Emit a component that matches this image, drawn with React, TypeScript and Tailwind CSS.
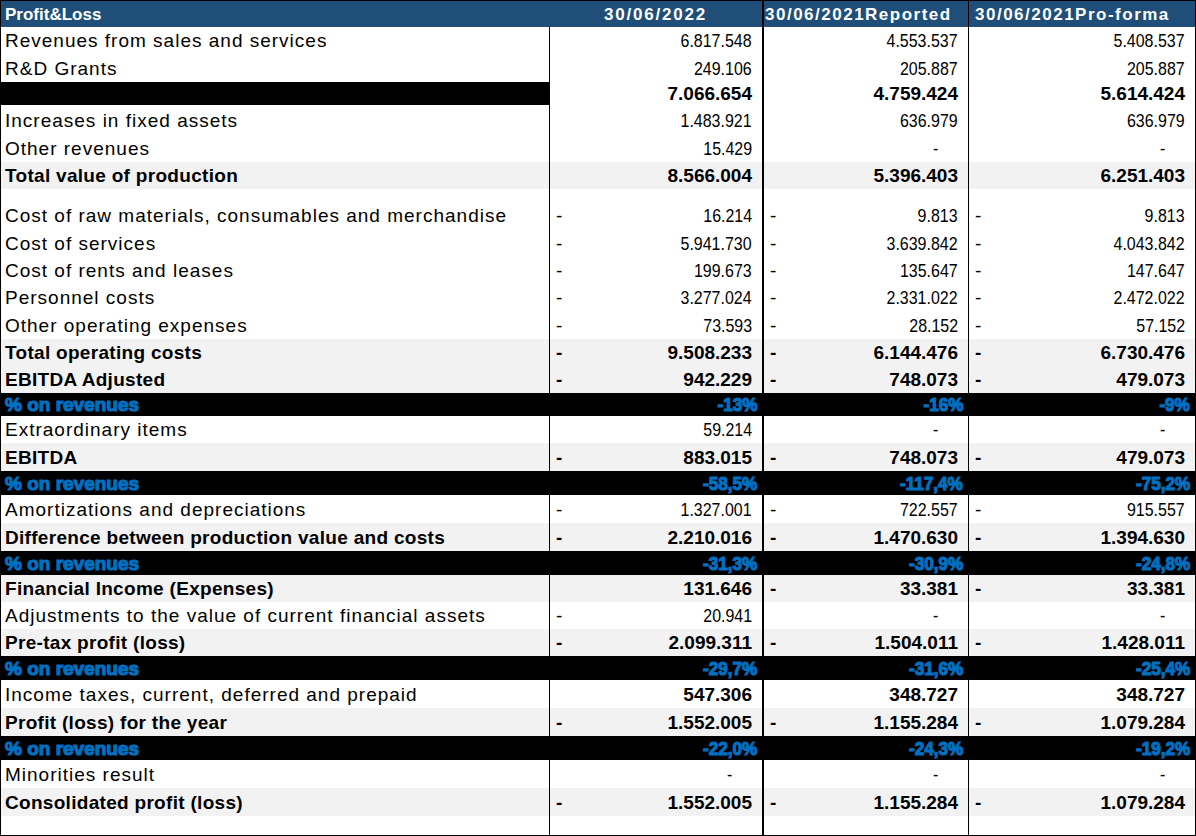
import React from "react";

type Kind = "normal" | "bold" | "pct" | "hidden" | "empty";

type Row = {
  label?: string;
  vals?: string[];
  kind: Kind;
  gray?: boolean;
  boldVals?: boolean;
  h: string;
};

const rows: Row[] = [
  { label: "Revenues from sales and services", vals: ["6.817.548", "4.553.537", "5.408.537"], kind: "normal", h: "h-[27px]" },
  { label: "R&D Grants", vals: ["249.106", "205.887", "205.887"], kind: "normal", h: "h-[28px]" },
  { label: "Total operating revenues", vals: ["7.066.654", "4.759.424", "5.614.424"], kind: "hidden", h: "h-[23px]" },
  { label: "Increases in fixed assets", vals: ["1.483.921", "636.979", "636.979"], kind: "normal", h: "h-[30px]" },
  { label: "Other revenues", vals: ["15.429", "0", "0"], kind: "normal", h: "h-[27px]" },
  { label: "Total value of production", vals: ["8.566.004", "5.396.403", "6.251.403"], kind: "bold", gray: true, h: "h-[27px]" },
  { kind: "empty", h: "h-[13px]" },
  { label: "Cost of raw materials, consumables and merchandise", vals: ["-16.214", "-9.813", "-9.813"], kind: "normal", h: "h-[27px]" },
  { label: "Cost of services", vals: ["-5.941.730", "-3.639.842", "-4.043.842"], kind: "normal", h: "h-[28px]" },
  { label: "Cost of rents and leases", vals: ["-199.673", "-135.647", "-147.647"], kind: "normal", h: "h-[27px]" },
  { label: "Personnel costs", vals: ["-3.277.024", "-2.331.022", "-2.472.022"], kind: "normal", h: "h-[27px]" },
  { label: "Other operating expenses", vals: ["-73.593", "-28.152", "-57.152"], kind: "normal", h: "h-[28px]" },
  { label: "Total operating costs", vals: ["-9.508.233", "-6.144.476", "-6.730.476"], kind: "bold", gray: true, h: "h-[27px]" },
  { label: "EBITDA Adjusted", vals: ["-942.229", "-748.073", "-479.073"], kind: "bold", gray: true, h: "h-[27px]" },
  { label: "% on revenues", vals: ["-13%", "-16%", "-9%"], kind: "pct", h: "h-[23px]" },
  { label: "Extraordinary items", vals: ["59.214", "0", "0"], kind: "normal", h: "h-[27px]" },
  { label: "EBITDA", vals: ["-883.015", "-748.073", "-479.073"], kind: "bold", gray: true, h: "h-[28px]" },
  { label: "% on revenues", vals: ["-58,5%", "-117,4%", "-75,2%"], kind: "pct", h: "h-[24px]" },
  { label: "Amortizations and depreciations", vals: ["-1.327.001", "-722.557", "-915.557"], kind: "normal", h: "h-[28px]" },
  { label: "Difference between production value and costs", vals: ["-2.210.016", "-1.470.630", "-1.394.630"], kind: "bold", gray: true, h: "h-[28px]" },
  { label: "% on revenues", vals: ["-31,3%", "-30,9%", "-24,8%"], kind: "pct", h: "h-[24px]" },
  { label: "Financial Income (Expenses)", vals: ["131.646", "-33.381", "-33.381"], kind: "bold", gray: true, h: "h-[27px]" },
  { label: "Adjustments to the value of current financial assets", vals: ["-20.941", "0", "0"], kind: "normal", h: "h-[27px]" },
  { label: "Pre-tax profit (loss)", vals: ["-2.099.311", "-1.504.011", "-1.428.011"], kind: "bold", gray: true, h: "h-[27px]" },
  { label: "% on revenues", vals: ["-29,7%", "-31,6%", "-25,4%"], kind: "pct", h: "h-[24px]" },
  { label: "Income taxes, current, deferred and prepaid", vals: ["547.306", "348.727", "348.727"], kind: "normal", boldVals: true, h: "h-[28px]" },
  { label: "Profit (loss) for the year", vals: ["-1.552.005", "-1.155.284", "-1.079.284"], kind: "bold", gray: true, h: "h-[28px]" },
  { label: "% on revenues", vals: ["-22,0%", "-24,3%", "-19,2%"], kind: "pct", h: "h-[24px]" },
  { label: "Minorities result", vals: ["0", "0", "0"], kind: "normal", h: "h-[28px]" },
  { label: "Consolidated profit (loss)", vals: ["-1.552.005", "-1.155.284", "-1.079.284"], kind: "bold", gray: true, h: "h-[28px]" },
];

const colBorders = ["border-l border-black", "border-l-2 border-black", "border-l border-black"];

function ValueCell({ v, bold, idx }: { v: string; bold: boolean; idx: number }) {
  const base = `${colBorders[idx]} flex items-center justify-between pl-[6px] leading-none`;
  if (v === "0") {
    return (
      <div className={`${base} justify-end pr-[30px]`}>
        <span className="inline-block origin-right scale-x-[0.84]">-</span>
      </div>
    );
  }
  const neg = v.startsWith("-");
  const num = neg ? v.slice(1) : v;
  return (
    <div className={`${base} pr-[10px] ${bold ? "font-bold" : ""}`}>
      <span>{neg ? "-" : ""}</span>
      {bold ? (
        <span>{num}</span>
      ) : (
        <span className="inline-block origin-right scale-x-[0.84]">{num}</span>
      )}
    </div>
  );
}

function TableRow({ row }: { row: Row }) {
  if (row.kind === "empty") {
    return (
      <div className={`grid grid-cols-[548px_213px_206px_227px] ${row.h}`}>
        <div />
        <div className={colBorders[0]} />
        <div className={colBorders[1]} />
        <div className={colBorders[2]} />
      </div>
    );
  }

  if (row.kind === "pct") {
    return (
      <div
        className={`grid grid-cols-[548px_213px_206px_227px] ${row.h} bg-black font-bold text-[#0070c0] [-webkit-text-stroke:1.2px_#0070c0]`}
      >
        <div className="flex items-center pl-[4px] leading-none">{row.label}</div>
        {row.vals!.map((v, i) => (
          <div key={i} className="flex items-center justify-end pr-[5px] leading-none">
            <span className="inline-block origin-right scale-x-[0.9]">{v}</span>
          </div>
        ))}
      </div>
    );
  }

  const labelCls =
    row.kind === "hidden"
      ? "bg-black text-black font-bold tracking-[0.3px]"
      : row.kind === "bold"
        ? "font-bold tracking-[0.3px]"
        : "tracking-[1px]";
  const valBold = row.kind === "bold" || row.kind === "hidden" || !!row.boldVals;

  return (
    <div className={`grid grid-cols-[548px_213px_206px_227px] ${row.h} ${row.gray ? "bg-[#f2f2f2]" : "bg-white"}`}>
      <div className={`flex items-center pl-[4px] leading-none whitespace-nowrap ${labelCls}`}>{row.label}</div>
      {row.vals!.map((v, i) => (
        <ValueCell key={i} v={v} bold={valBold} idx={i} />
      ))}
    </div>
  );
}

export default function App() {
  return (
    <div className="w-[1196px] h-[836px] bg-white font-['Liberation_Sans',Arial,sans-serif] text-[19px] text-black overflow-hidden">
      <div className="flex h-full flex-col border border-black">
        <div className="grid h-[26px] grid-cols-[548px_213px_206px_227px] bg-[#1f4e79] text-[17px] font-bold text-white leading-none">
          <div className="flex items-center pl-[4px]">Profit&amp;Loss</div>
          <div className="flex items-center justify-center tracking-[1.8px]">30/06/2022</div>
          <div className="flex items-center border-l-2 border-black pl-[1px] tracking-[1.5px] whitespace-nowrap">
            30/06/2021Reported
          </div>
          <div className="flex items-center border-l border-black pl-[6px] tracking-[1.5px] whitespace-nowrap">
            30/06/2021Pro-forma
          </div>
        </div>
        {rows.map((r, i) => (
          <TableRow key={i} row={r} />
        ))}
        <div className="grid flex-1 grid-cols-[548px_213px_206px_227px]">
          <div />
          <div className={colBorders[0]} />
          <div className={colBorders[1]} />
          <div className={colBorders[2]} />
        </div>
      </div>
    </div>
  );
}
